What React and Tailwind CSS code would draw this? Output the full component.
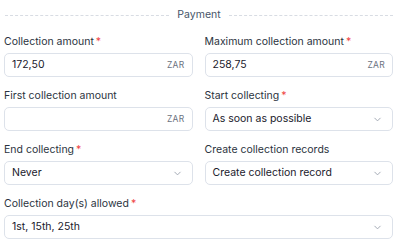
import React from "react";

const Req = () => <span className="text-[#ef4444] ml-[2px]">*</span>;

const Label = ({ children, req }) => (
  <div className="h-[16px] leading-[16px] text-[10.5px] text-[#2b3340] mb-[3px] whitespace-nowrap">
    {children}
    {req && <Req />}
  </div>
);

const Chevron = () => (
  <svg width="11" height="11" viewBox="0 0 24 24" fill="none" stroke="#9ca3af" strokeWidth="2" strokeLinecap="round" strokeLinejoin="round">
    <path d="M6 9l6 6 6-6" />
  </svg>
);

const Input = ({ value }) => (
  <div className="h-[24px] rounded-[5px] border border-[#dde2ea] bg-white flex items-center justify-between pl-[7px] pr-[7px]">
    <span className="text-[10.5px] text-[#1a202c]">{value}</span>
    <span className="text-[8.5px] text-[#6b7280] tracking-[0.3px]">ZAR</span>
  </div>
);

const Select = ({ value }) => (
  <div className="h-[24px] rounded-[5px] border border-[#dde2ea] bg-white flex items-center justify-between pl-[7px] pr-[9px]">
    <span className="text-[10.5px] text-[#1a202c]">{value}</span>
    <Chevron />
  </div>
);

export default function App() {
  return (
    <div className="w-[400px] h-[248px] bg-white pl-[4px] pr-[7px]" style={{ fontFamily: "Inter, sans-serif" }}>
      <div className="h-[30px] flex items-center gap-[8px] pl-[1px]">
        <div className="flex-1 border-t border-dashed border-[#d8dce3]" />
        <div className="text-[10.5px] text-[#475569]">Payment</div>
        <div className="flex-1 border-t border-dashed border-[#d8dce3]" />
      </div>
      <div className="grid grid-cols-2 gap-x-[12px] gap-y-[11px] pt-[4px]">
        <div>
          <Label req>Collection amount</Label>
          <Input value="172,50" />
        </div>
        <div>
          <Label req>Maximum collection amount</Label>
          <Input value="258,75" />
        </div>
        <div>
          <Label>First collection amount</Label>
          <Input value="" />
        </div>
        <div>
          <Label req>Start collecting</Label>
          <Select value="As soon as possible" />
        </div>
        <div>
          <Label req>End collecting</Label>
          <Select value="Never" />
        </div>
        <div>
          <Label>Create collection records</Label>
          <Select value="Create collection record" />
        </div>
        <div className="col-span-2">
          <Label req>Collection day(s) allowed</Label>
          <Select value="1st, 15th, 25th" />
        </div>
      </div>
    </div>
  );
}
